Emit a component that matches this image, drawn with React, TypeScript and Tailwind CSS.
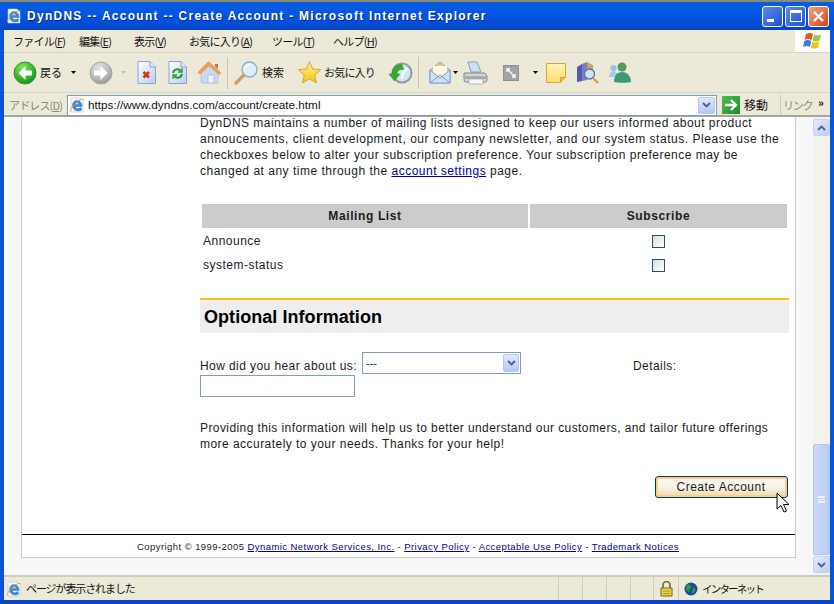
import React from "react";

const IE = ({ s = 16 }: { s?: number }) => (
  <svg width={s} height={s} viewBox="0 0 16 16">
    <path d="M2 1h9l3 3v11H2z" fill="#f4f8fd" stroke="#b8c4d8" strokeWidth=".6" />
    <path d="M13 9.600H6.300c.2 2 3.300 2.900 5.600 1l.8 2.400c-3.500 2-9 .8-9.200-4.200C3.300 3.800 8.400 2.500 11 4.500c1.300 1 2.100 3 2 5.100zM6.300 7.400h3.800C10 5.300 6.700 5.300 6.300 7.400z" fill="#3a8ad8" stroke="#1d5fb0" strokeWidth=".4" />
    <path d="M1.500 14.500C.5 12.500 5 6 10 3.500c2.500-1.200 4.500-1.500 5-.5" fill="none" stroke="#e0a030" strokeWidth=".9" />
  </svg>
);

const Caret = ({ c = "#000" }: { c?: string }) => (
  <svg width="5" height="3" viewBox="0 0 5 3"><path d="M0 0h5L2.500 3z" fill={c} /></svg>
);

const Chevron = ({ up }: { up?: boolean }) => (
  <svg width="9" height="6" viewBox="0 0 9 6"><path d={up ? "M1 5l3.500-3.500L8 5" : "M1 1l3.500 3.500L8 1"} fill="none" stroke="#4d6185" strokeWidth="1.800" /></svg>
);

const Arrow = ({ back, gray }: { back?: boolean; gray?: boolean }) => (
  <svg width="24" height="24" viewBox="0 0 24 24">
    <defs>
      <radialGradient id={gray ? "ag" : "ac"} cx="40%" cy="28%" r="80%">
        <stop offset="0" stopColor={gray ? "#e4e4e4" : "#8fe06a"} />
        <stop offset=".55" stopColor={gray ? "#bdbdbd" : "#3eb82e"} />
        <stop offset="1" stopColor={gray ? "#8f8f8f" : "#128a1a"} />
      </radialGradient>
    </defs>
    <circle cx="12" cy="12" r="11" fill={`url(#${gray ? "ag" : "ac"})`} stroke={gray ? "#a8a8a8" : "#2a9a2a"} />
    <path d={back ? "M12.500 5 5.500 12l7 7v-4.500H19v-5h-6.500z" : "M11.500 5 18.500 12l-7 7v-4.500H5v-5h6.500z"} fill="#fff" />
  </svg>
);

const Doc = ({ children }: { children: React.ReactNode }) => (
  <svg width="19" height="23" viewBox="0 0 19 23">
    <defs>
      <linearGradient id="dg" x1="0" y1="0" x2="1" y2="1">
        <stop offset="0" stopColor="#fff" />
        <stop offset="1" stopColor="#b6cdf0" />
      </linearGradient>
    </defs>
    <path d="M1 .5h12l5.500 5.500v16.500H1z" fill="url(#dg)" stroke="#8aa4cc" />
    <path d="M13 .5V6h5.500" fill="#dfe9f8" stroke="#8aa4cc" />
    {children}
  </svg>
);

const Menu = ({ w, a, k }: { w: string; a: string; k: string }) => (
  <span className={`${w} whitespace-nowrap tracking-[-.75px]`}>{a}(<span className="underline">{k}</span>)</span>
);

const Link = ({ children }: { children: React.ReactNode }) => <a className="text-[#0000a0] underline">{children}</a>;

const Check = () => <div className="w-[13px] h-[13px] border border-[#1c5180] bg-gradient-to-br from-[#dcdcd7] to-white" />;

export default function App() {
  return (
    <div className="w-[834px] h-[604px] overflow-hidden flex flex-col bg-[#0a52d8] font-['Liberation_Sans',sans-serif] text-black">
      {/* title bar */}
      <div className="h-[30px] shrink-0 flex items-center pl-[6px] pr-[5px] bg-gradient-to-b from-[#0a5de0] via-[#0355e4] to-[#0446c8] border-t-2 border-t-[#8a8a78]">
        <IE s={16} />
        <span className="ml-[5px] text-white font-bold text-[12px] tracking-[1.27px] whitespace-nowrap [text-shadow:1px_1px_0_#0a2a80]">
          DynDNS -- Account -- Create Account - Microsoft Internet Explorer
        </span>
        <div className="ml-auto flex gap-[2px]">
          <div className="w-[21px] h-[21px] rounded-[3px] border border-white bg-gradient-to-br from-[#5a8cf0] to-[#1f4fd0] flex items-end pl-[4px] pb-[4px]">
            <div className="w-[7px] h-[3px] bg-white" />
          </div>
          <div className="w-[21px] h-[21px] rounded-[3px] border border-white bg-gradient-to-br from-[#5a8cf0] to-[#1f4fd0] flex items-center justify-center">
            <div className="w-[12px] h-[12px] border border-white border-t-[3px]" />
          </div>
          <div className="w-[21px] h-[21px] rounded-[3px] border border-white bg-gradient-to-br from-[#f0a080] to-[#d0401a] flex items-center justify-center">
            <svg width="13" height="13" viewBox="0 0 13 13"><path d="M2 2l9 9M11 2l-9 9" stroke="#fff" strokeWidth="2.400" /></svg>
          </div>
        </div>
      </div>

      {/* window body */}
      <div className="flex-1 min-h-0 mx-[4px] flex flex-col bg-[#ece9d8]">
        {/* menu */}
        <div className="h-[23px] shrink-0 flex items-stretch border-b border-b-[#d8d4c2]">
          <div className="flex-1 flex items-center pl-[9px] text-[11px] font-['Noto_Sans_CJK_JP',sans-serif] text-[#111]">
            <Menu w="w-[66px]" a="ファイル" k="F" />
            <Menu w="w-[55px]" a="編集" k="E" />
            <Menu w="w-[55px]" a="表示" k="V" />
            <Menu w="w-[83px]" a="お気に入り" k="A" />
            <Menu w="w-[61px]" a="ツール" k="T" />
            <Menu w="w-[61px]" a="ヘルプ" k="H" />
          </div>
          <div className="w-[35px] bg-white flex items-center justify-center">
            <svg width="20" height="18" viewBox="0 0 20 18">
              <path d="M3 2c3-1.500 5-1 7 0L8.500 8c-2-1-4-1.500-7 0z" fill="#e8552a" />
              <path d="M11 2.500c2 1 4 1.500 7 0L16.500 8.500c-3 1.500-5 1-7 0z" fill="#9cc83a" />
              <path d="M1.300 9c3-1.500 5-1 7 0L7 15c-2-1-4-1.500-7 0z" fill="#3a7fd0" />
              <path d="M9.300 9.500c2 1 4 1.500 7 0L15 15.500c-3 1.500-5 1-7 0z" fill="#f0c020" />
            </svg>
          </div>
        </div>

        {/* toolbar */}
        <div className="h-[40px] shrink-0 flex items-center pl-[9px] text-[11px] font-['Noto_Sans_CJK_JP',sans-serif] text-[#111] border-b border-b-[#d8d4c2]">
          <Arrow back />
          <span className="ml-[3px] w-[22px]">戻る</span>
          <span className="ml-[9px]"><Caret /></span>
          <span className="ml-[13px]"><Arrow gray /></span>
          <span className="ml-[8px]"><Caret c="#bbb" /></span>
          <span className="ml-[11px]">
            <Doc><path d="M6.500 11l5.500 5.500M12 11l-5.500 5.500" stroke="#d8301a" strokeWidth="2.600" /></Doc>
          </span>
          <span className="ml-[12px]">
            <Doc>
              <g fill="none" stroke="#1f9a2c" strokeWidth="2">
                <path d="M5 12a4.500 4.500 0 0 1 8-2" /><path d="M14 13a4.500 4.500 0 0 1-8 2" />
                <path d="M14 7v4h-4M5 18v-4h4" strokeWidth="1.300" />
              </g>
            </Doc>
          </span>
          <svg className="ml-[10px]" width="25" height="25" viewBox="0 0 25 25">
            <path d="M4 12 12 5l9 7v10a1 1 0 0 1-1 1H5a1 1 0 0 1-1-1z" fill="#c6daf0" stroke="#9db0cc" strokeWidth=".6" />
            <path d="M11 15h6v8h-6z" fill="#eef2f8" stroke="#9db0cc" strokeWidth=".6" />
            <path d="M1 12.500 11.500 1.500 24 13l-2 1.500L12 5.500 3 14z" fill="#f2a04a" stroke="#cf7a30" strokeWidth=".5" />
            <path d="M18 4h3v5l-3-2.700z" fill="#d86a30" />
          </svg>
          <div className="ml-[5px] w-px h-[32px] bg-[#c8c4b0]" />
          <svg className="ml-[5px]" width="26" height="26" viewBox="0 0 26 26">
            <circle cx="16.500" cy="9.500" r="7.500" fill="#dcf0fc" stroke="#82acd4" strokeWidth="1.300" />
            <path d="M12 7.500a5 5 0 0 1 5-3" fill="none" stroke="#fff" strokeWidth="1.500" />
            <path d="M10.500 15.500 3 23" stroke="#d89a60" strokeWidth="3.400" strokeLinecap="round" />
          </svg>
          <span className="ml-[3px] w-[22px]">検索</span>
          <svg className="ml-[13px]" width="25" height="25" viewBox="0 0 25 25">
            <defs>
              <linearGradient id="st" x1="0" y1="0" x2="0" y2="1">
                <stop offset="0" stopColor="#fff08a" />
                <stop offset="1" stopColor="#f8c420" />
              </linearGradient>
            </defs>
            <path d="M12.500 1.500l3.200 7.500 8 .7-6 5.300 1.800 8-7-4.200-7 4.200 1.800-8-6-5.300 8-.7z" fill="url(#st)" stroke="#d8a430" />
          </svg>
          <span className="ml-[2px] w-[51px] whitespace-nowrap tracking-[-.8px]">お気に入り</span>
          <svg className="ml-[14px]" width="24" height="24" viewBox="0 0 24 24">
            <circle cx="13" cy="12" r="9.500" fill="#d4e6f2" stroke="#8e9ba2" strokeWidth="2" />
            <path d="M14 12l4.500-4.500M14 12l-1 6" fill="none" stroke="#fff" strokeWidth="1.600" />
            <path d="M3 13C3 7 8 3 13 3.500l1.500 5C10 8 8 10 8 13h3l-5.500 7L0 13z" fill="#36a82e" stroke="#1f8a24" strokeWidth=".5" />
          </svg>
          <div className="ml-[5px] w-px h-[32px] bg-[#c8c4b0]" />
          <svg className="ml-[9px]" width="24" height="24" viewBox="0 0 24 24">
            <path d="M2 9 12 1l10 8v13H2z" fill="#f4c87a" stroke="#88a4d0" />
            <path d="M5 5h14v9l-7 4-7-4z" fill="#fdf6e0" />
            <path d="M2 9l10 8 10-8v13H2z" fill="#cfe0f8" stroke="#7c9ad0" />
            <path d="M2 22l10-8 10 8" fill="none" stroke="#7c9ad0" />
          </svg>
          <span className="ml-[1px]"><Caret /></span>
          <svg className="ml-[5px]" width="25" height="24" viewBox="0 0 25 24">
            <path d="M5 1h9l4 10H8z" fill="#cfe0f2" stroke="#8aa0b8" />
            <path d="M1 12h21l2 3v4a2 2 0 0 1-2 2H3a2 2 0 0 1-2-2z" fill="#d4d6d8" stroke="#808488" />
            <path d="M2 15h21v3H2z" fill="#a8acb0" />
            <path d="M6 18h14v5H6z" fill="#f6f6f6" stroke="#9a9a9a" strokeWidth=".6" />
          </svg>
          <div className="ml-[15px] w-[16px] h-[16px] bg-[#a4a4a4] border border-[#909090] flex items-center justify-center">
            <svg width="10" height="10" viewBox="0 0 10 10" fill="none" stroke="#fff" strokeWidth="1.300"><path d="M1 1l8 8M1 4V1h3M9 6v3H6" /></svg>
          </div>
          <span className="ml-[14px]"><Caret /></span>
          <svg className="ml-[7px]" width="22" height="22" viewBox="0 0 22 22">
            <defs>
              <linearGradient id="nt" x1="0" y1="0" x2="0" y2="1">
                <stop offset="0" stopColor="#fff4b8" />
                <stop offset="1" stopColor="#fbdc70" />
              </linearGradient>
            </defs>
            <path d="M1.500 2a.500.500 0 0 1 .500-.500h18a.500.500 0 0 1 .500.500V15.500l-5 5H2a.500.500 0 0 1-.500-.500z" fill="url(#nt)" stroke="#d8a430" />
            <path d="M20.500 15.500H15.500v5" fill="#f0c040" stroke="#d8a430" />
          </svg>
          <svg className="ml-[9px]" width="23" height="23" viewBox="0 0 23 23">
            <path d="M1 6l5-3v17l-5 1z" fill="#5858b0" />
            <path d="M6 3l5-2v18l-5 1z" fill="#7c7cc8" />
            <path d="M11 1l6 3v9H11z" fill="#c8a860" />
            <circle cx="13.500" cy="13" r="5" fill="#cfe4f6" stroke="#507a9a" strokeWidth="1.300" />
            <path d="M17 17l5 5" stroke="#d89a40" strokeWidth="2.200" />
          </svg>
          <svg className="ml-[9px]" width="24" height="21" viewBox="0 0 24 21">
            <circle cx="5.500" cy="6" r="3" fill="#8cc4ec" />
            <path d="M1 15c0-3 2-6 4.500-6S10 12 10 15z" fill="#a4cce8" />
            <circle cx="14" cy="5" r="4.500" fill="#4f9a5c" />
            <path d="M6 20c0-6 3-10 8-10s9 4 9 10c-3 1-14 1-17 0z" fill="#3a9a78" />
          </svg>
        </div>

        {/* address */}
        <div className="h-[24px] shrink-0 flex items-center pt-[2px] text-[11px] font-['Noto_Sans_CJK_JP',sans-serif] border-b-2 border-b-[#a8a698]">
          <span className="ml-[5px] w-[57px] text-[#8a8878] whitespace-nowrap tracking-[-.85px]">アドレス(<span className="underline">D</span>)</span>
          <div className="ml-[1px] w-[650px] h-[21px] bg-white border border-[#7f9db9] flex items-center pl-[1px] pr-[1px]">
            <IE s={16} />
            <span className="ml-[3px] text-[11.750px] text-[#111] font-['Liberation_Sans',sans-serif]">https://www.dyndns.com/account/create.html</span>
            <div className="ml-auto w-[17px] h-[17px] rounded-[2px] bg-gradient-to-b from-[#dfe8fb] to-[#b4c8f4] border border-[#b8c8ec] flex items-center justify-center">
              <Chevron />
            </div>
          </div>
          <div className="ml-[5px] w-[18px] h-[18px] bg-gradient-to-br from-[#4cc04c] to-[#1f8a2a] flex items-center justify-center">
            <svg width="14" height="14" viewBox="0 0 14 14"><path d="M1 7h10M7 2l5 5-5 5" fill="none" stroke="#fff" strokeWidth="2.400" /></svg>
          </div>
          <span className="ml-[4px] w-[25px] whitespace-nowrap text-[12px] text-[#111]">移動</span>
          <div className="ml-[11px] w-px h-[20px] bg-[#d0ccb8]" />
          <span className="ml-[2px] w-[27px] whitespace-nowrap text-[#8a8878] tracking-[-1.200px]">リンク</span>
          <span className="ml-[8px] text-[11px] text-[#111] font-bold leading-none -mt-[6px]">»</span>
        </div>

        {/* viewport */}
        <div className="flex-1 min-h-0 flex bg-[#f7f7f7] overflow-hidden">
          <div className="flex-1 min-w-0 pl-[17px] pr-[17px]">
            <div className="h-[441px] bg-white border border-[#ccc] border-t-0 text-[12px] tracking-[.5px] text-[#1c1c1c] overflow-hidden">
              <div className="pl-[178px] pr-[6px]">
                <p className="leading-[16px] -mt-[2px] whitespace-nowrap">
                  <span className="tracking-[.47px]">DynDNS maintains a number of mailing lists designed to keep our users informed about product</span><br />
                  <span className="tracking-[.53px]">annoucements, client development, our company newsletter, and our system status. Please use the</span><br />
                  <span className="tracking-[.48px]">checkboxes below to alter your subscription preference. Your subscription preference may be</span><br />
                  changed at any time through the <Link>account settings</Link> page.
                </p>
                <div className="mt-[25px] ml-[2px] mr-[2px]">
                  <div className="flex gap-[2px] text-center font-bold tracking-[.62px]">
                    <div className="w-[326px] h-[24px] bg-[#ccc] leading-[24px]">Mailing List</div>
                    <div className="flex-1 h-[24px] bg-[#ccc] leading-[24px]">Subscribe</div>
                  </div>
                  <div className="flex h-[24px] items-center mt-[1px]">
                    <div className="w-[328px] pl-[1px]">Announce</div>
                    <div className="flex-1 flex justify-center"><Check /></div>
                  </div>
                  <div className="flex h-[24px] items-center">
                    <div className="w-[328px] pl-[1px]">system-status</div>
                    <div className="flex-1 flex justify-center"><Check /></div>
                  </div>
                </div>

                <div className="mt-[21px] h-[35px] border-t-2 border-t-[#f5c816] bg-[#eee] pl-[4px] pt-[2px] flex items-center text-[18px] font-bold tracking-[.05px] text-black">Optional Information</div>

                <div className="mt-[19px] flex items-center h-[22px]">
                  <span className="mt-[5px] tracking-[.42px]">How did you hear about us:</span>
                  <div className="ml-[5px] w-[159px] h-[22px] bg-white border border-[#7f9db9] flex items-center pl-[3px] pr-[1px] text-[11px] tracking-normal">
                    <span>---</span>
                    <div className="ml-auto w-[16px] h-[18px] rounded-[2px] bg-gradient-to-b from-[#dfe8fb] to-[#b4c8f4] border border-[#b8c8ec] flex items-center justify-center">
                      <Chevron />
                    </div>
                  </div>
                  <span className="ml-[112px] mt-[5px] tracking-[.42px]">Details:</span>
                </div>
                <div className="mt-[1px] w-[155px] h-[22px] bg-white border border-[#7f9db9]" />

                <p className="mt-[23px] leading-[16px] whitespace-nowrap tracking-[.46px]">
                  <span className="tracking-[.41px]">Providing this information will help us to better understand our customers, and tailor future offerings</span><br />more accurately to your needs. Thanks for your help!
                </p>

                <div className="mt-[24px] flex justify-end mr-[1px] relative">
                  <div className="w-[133px] h-[22px] rounded-[3px] border border-[#003c74] bg-gradient-to-b from-[#fff9e8] via-[#f6f4ec] to-[#f0d8a0] shadow-[inset_0_0_0_2px_#f8d080] flex items-center justify-center text-[12px] pr-[1px]">Create Account</div>
                  <svg className="absolute right-[-2px] top-[16px]" width="14" height="21" viewBox="0 0 14 21">
                    <path d="M1 1v16l4-3.500 3 6.500 2.500-1-3-6.500h5.500z" fill="#fff" stroke="#000" />
                  </svg>
                </div>
              </div>
              <div className="mt-[36px] border-t border-t-black h-[25px] flex items-center justify-center text-[9.500px] tracking-[.43px] pr-[1px] whitespace-nowrap">
                <span>Copyright © 1999-2005&nbsp;<Link>Dynamic Network Services, Inc.</Link> - <Link>Privacy Policy</Link> - <Link>Acceptable Use Policy</Link> - <Link>Trademark Notices</Link></span>
              </div>
            </div>
          </div>
          {/* scrollbar */}
          <div className="w-[17px] shrink-0 bg-[#f3f3ee] flex flex-col pt-[2px] pb-[2px]">
            <div className="h-[17px] rounded-[2px] bg-gradient-to-br from-[#e4ecfd] to-[#bccdf6] border border-[#c4d2f6] flex items-center justify-center">
              <Chevron up />
            </div>
            <div className="flex-1" />
            <div className="h-[111px] rounded-[2px] bg-gradient-to-r from-[#cdd9fb] to-[#b8cbf8] border border-[#b0c4f4] flex items-center justify-center">
              <div className="w-[7px] h-[7px] border-y-2 border-y-[#eef2fe] relative after:content-[''] after:absolute after:left-0 after:right-0 after:top-[1px] after:h-px after:bg-[#eef2fe]" />
            </div>
            <div className="h-[17px] mt-[1px] rounded-[2px] bg-gradient-to-br from-[#e4ecfd] to-[#bccdf6] border border-[#c4d2f6] flex items-center justify-center">
              <Chevron />
            </div>
          </div>
        </div>

        {/* status */}
        <div className="h-[25px] shrink-0 flex items-center bg-[#ece9d8] border-t-2 border-t-[#d0ccb8] text-[11px] font-['Noto_Sans_CJK_JP',sans-serif] text-[#111]">
          <span className="ml-[2px]"><IE s={16} /></span>
          <span className="ml-[4px] whitespace-nowrap tracking-[-1.100px]">ページが表示されました</span>
          <div className="ml-auto flex h-full items-stretch">
            <div className="w-[24px] border-l border-l-[#d0ccb8]" />
            <div className="w-[24px] border-l border-l-[#d0ccb8]" />
            <div className="w-[24px] border-l border-l-[#d0ccb8]" />
            <div className="w-[23px] border-l border-l-[#d0ccb8]" />
            <div className="w-[25px] border-l border-l-[#d0ccb8] flex items-center justify-center">
              <svg width="13" height="16" viewBox="0 0 13 16"><path d="M3 7V4a3.500 3.500 0 0 1 7 0v3" fill="none" stroke="#6a6a30" strokeWidth="1.600" /><path d="M1 7h11v8H1z" fill="#e8d838" stroke="#6a6a20" /><path d="M3 10h7M3 12.500h7" stroke="#8a8a20" strokeWidth=".8" /></svg>
            </div>
            <div className="w-[152px] border-l border-l-[#d0ccb8] flex items-center pl-[5px]">
              <svg width="14" height="14" viewBox="0 0 14 14"><circle cx="7" cy="7" r="6.500" fill="#1c4a9c" /><path d="M3 3c2-1 4 0 4 2s-3 2-2 4-3 0-3-3zM9 6c2 0 3 1 2 3s-3 3-3 1z" fill="#2fa02f" /></svg>
              <span className="ml-[4px] whitespace-nowrap text-[10.500px] tracking-[-1.800px]">インターネット</span>
            </div>
          </div>
        </div>
      </div>
      <div className="h-[4px] shrink-0 bg-[#0a46c8]" />
    </div>
  );
}
